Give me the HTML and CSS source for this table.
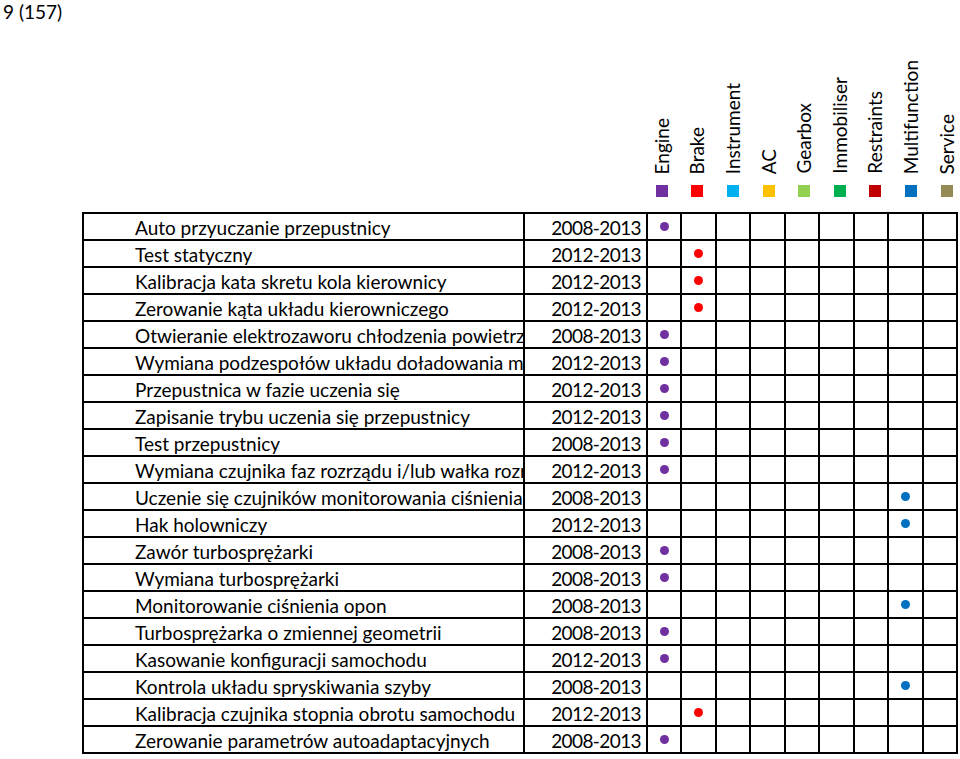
FILE: index.html
```html
<!DOCTYPE html>
<html lang="pl">
<head>
<meta charset="utf-8">
<title>9 (157)</title>
<link rel="stylesheet" href="styles.css">
</head>
<body>
<div class="page-title">9 (157)</div>
<div class="legend">
  <div class="legend-item"><span class="legend-label">Engine</span><span class="swatch engine"></span></div>
  <div class="legend-item"><span class="legend-label">Brake</span><span class="swatch brake"></span></div>
  <div class="legend-item"><span class="legend-label">Instrument</span><span class="swatch instrument"></span></div>
  <div class="legend-item"><span class="legend-label">AC</span><span class="swatch ac"></span></div>
  <div class="legend-item"><span class="legend-label">Gearbox</span><span class="swatch gearbox"></span></div>
  <div class="legend-item"><span class="legend-label">Immobiliser</span><span class="swatch immobiliser"></span></div>
  <div class="legend-item"><span class="legend-label">Restraints</span><span class="swatch restraints"></span></div>
  <div class="legend-item"><span class="legend-label">Multifunction</span><span class="swatch multifunction"></span></div>
  <div class="legend-item"><span class="legend-label">Service</span><span class="swatch service"></span></div>
</div>
<table class="grid">
  <colgroup><col class="col-name"><col class="col-date"><col><col><col><col><col><col><col><col><col></colgroup>
  <tbody>
    <tr><td class="name">Auto przyuczanie przepustnicy</td><td class="date">2008-2013</td><td class="mark"><span class="dot engine"></span></td><td></td><td></td><td></td><td></td><td></td><td></td><td></td><td></td></tr>
    <tr><td class="name">Test statyczny</td><td class="date">2012-2013</td><td></td><td class="mark"><span class="dot brake"></span></td><td></td><td></td><td></td><td></td><td></td><td></td><td></td></tr>
    <tr><td class="name">Kalibracja kata skretu kola kierownicy</td><td class="date">2012-2013</td><td></td><td class="mark"><span class="dot brake"></span></td><td></td><td></td><td></td><td></td><td></td><td></td><td></td></tr>
    <tr><td class="name">Zerowanie kąta układu kierowniczego</td><td class="date">2012-2013</td><td></td><td class="mark"><span class="dot brake"></span></td><td></td><td></td><td></td><td></td><td></td><td></td><td></td></tr>
    <tr><td class="name">Otwieranie elektrozaworu chłodzenia powietrza</td><td class="date">2008-2013</td><td class="mark"><span class="dot engine"></span></td><td></td><td></td><td></td><td></td><td></td><td></td><td></td><td></td></tr>
    <tr><td class="name">Wymiana podzespołów układu doładowania mechanicznego</td><td class="date">2012-2013</td><td class="mark"><span class="dot engine"></span></td><td></td><td></td><td></td><td></td><td></td><td></td><td></td><td></td></tr>
    <tr><td class="name">Przepustnica w fazie uczenia się</td><td class="date">2012-2013</td><td class="mark"><span class="dot engine"></span></td><td></td><td></td><td></td><td></td><td></td><td></td><td></td><td></td></tr>
    <tr><td class="name">Zapisanie trybu uczenia się przepustnicy</td><td class="date">2012-2013</td><td class="mark"><span class="dot engine"></span></td><td></td><td></td><td></td><td></td><td></td><td></td><td></td><td></td></tr>
    <tr><td class="name">Test przepustnicy</td><td class="date">2008-2013</td><td class="mark"><span class="dot engine"></span></td><td></td><td></td><td></td><td></td><td></td><td></td><td></td><td></td></tr>
    <tr><td class="name">Wymiana czujnika faz rozrządu i/lub wałka rozrządu</td><td class="date">2012-2013</td><td class="mark"><span class="dot engine"></span></td><td></td><td></td><td></td><td></td><td></td><td></td><td></td><td></td></tr>
    <tr><td class="name">Uczenie się czujników monitorowania ciśnienia opon</td><td class="date">2008-2013</td><td></td><td></td><td></td><td></td><td></td><td></td><td></td><td class="mark"><span class="dot multifunction"></span></td><td></td></tr>
    <tr><td class="name">Hak holowniczy</td><td class="date">2012-2013</td><td></td><td></td><td></td><td></td><td></td><td></td><td></td><td class="mark"><span class="dot multifunction"></span></td><td></td></tr>
    <tr><td class="name">Zawór turbosprężarki</td><td class="date">2008-2013</td><td class="mark"><span class="dot engine"></span></td><td></td><td></td><td></td><td></td><td></td><td></td><td></td><td></td></tr>
    <tr><td class="name">Wymiana turbosprężarki</td><td class="date">2008-2013</td><td class="mark"><span class="dot engine"></span></td><td></td><td></td><td></td><td></td><td></td><td></td><td></td><td></td></tr>
    <tr><td class="name">Monitorowanie ciśnienia opon</td><td class="date">2008-2013</td><td></td><td></td><td></td><td></td><td></td><td></td><td></td><td class="mark"><span class="dot multifunction"></span></td><td></td></tr>
    <tr><td class="name">Turbosprężarka o zmiennej geometrii</td><td class="date">2008-2013</td><td class="mark"><span class="dot engine"></span></td><td></td><td></td><td></td><td></td><td></td><td></td><td></td><td></td></tr>
    <tr><td class="name">Kasowanie konfiguracji samochodu</td><td class="date">2012-2013</td><td class="mark"><span class="dot engine"></span></td><td></td><td></td><td></td><td></td><td></td><td></td><td></td><td></td></tr>
    <tr><td class="name">Kontrola układu spryskiwania szyby</td><td class="date">2008-2013</td><td></td><td></td><td></td><td></td><td></td><td></td><td></td><td class="mark"><span class="dot multifunction"></span></td><td></td></tr>
    <tr><td class="name">Kalibracja czujnika stopnia obrotu samochodu</td><td class="date">2012-2013</td><td></td><td class="mark"><span class="dot brake"></span></td><td></td><td></td><td></td><td></td><td></td><td></td><td></td></tr>
    <tr><td class="name">Zerowanie parametrów autoadaptacyjnych</td><td class="date">2008-2013</td><td class="mark"><span class="dot engine"></span></td><td></td><td></td><td></td><td></td><td></td><td></td><td></td><td></td></tr>
  </tbody>
</table>
</body>
</html>
```
FILE: styles.css
```css
html, body {
  margin: 0;
  padding: 0;
  background: #fff;
}
body {
  font-family: Lato, "Liberation Sans", sans-serif;
  color: #000;
}
.page-title {
  height: 26px;
  padding-left: 3px;
  font-size: 19px;
  line-height: 24px;
}
.legend {
  display: grid;
  grid-template-columns: repeat(9, 35.6px);
  margin-left: 644px;
  height: 186px;
  box-sizing: border-box;
  padding-bottom: 15px;
}
.legend-item {
  display: flex;
  flex-direction: column;
  align-items: center;
  justify-content: flex-end;
}
.legend-label {
  writing-mode: vertical-rl;
  transform: rotate(180deg);
  font-size: 19px;
  line-height: 22px;
  margin-bottom: 11px;
  white-space: nowrap;
}
.swatch {
  width: 12px;
  height: 12px;
  display: block;
}
.engine { background: #7030a0; }
.brake { background: #ff0000; }
.instrument { background: #00b0f0; }
.ac { background: #ffc000; }
.gearbox { background: #92d050; }
.immobiliser { background: #00b050; }
.restraints { background: #c00000; }
.multifunction { background: #0070c0; }
.service { background: #948a54; }

.grid {
  border-collapse: collapse;
  table-layout: fixed;
  width: 876px;
  margin-left: 82px;
  font-size: 19px;
}
.col-name { width: 441px; }
.col-date { width: 123px; }
.grid tr { height: 27px; }
.grid td {
  border: 2px solid #000;
  padding: 2px 0 0;
  line-height: 23px;
  white-space: nowrap;
  overflow: hidden;
}
.grid td.name {
  padding-left: 51px;
}
.grid td.date {
  text-align: right;
  padding-right: 5px;
  letter-spacing: -0.6px;
}
.grid td.mark {
  text-align: center;
  padding-top: 0;
}
.dot {
  display: block;
  width: 9px;
  height: 9px;
  border-radius: 50%;
  margin: 0 auto;
}
```
